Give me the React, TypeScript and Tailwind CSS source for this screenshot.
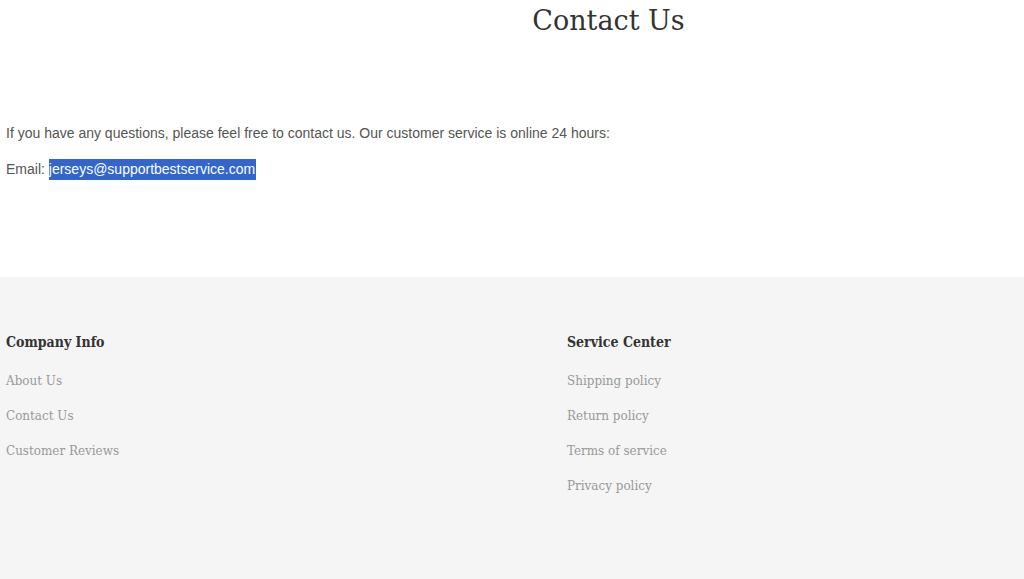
import React from "react";

const serif = { fontFamily: '"DejaVu Serif", "Liberation Serif", serif' };
const serifC = { fontFamily: '"DejaVu Serif Condensed", "DejaVu Serif", serif' };

export default function App() {
  return (
    <div className="w-[1024px] h-[579px] overflow-hidden bg-white flex flex-col">
      <div className="h-[277px] flex flex-col">
        <h1
          className="pl-[193px] pt-[1px] text-center text-[27px] leading-[40px] text-[#333] font-normal"
          style={serif}
        >
          Contact Us
        </h1>
        <div
          className="px-[6px] pt-[84px] text-[14px] text-[#555]"
          style={{ fontFamily: '"Liberation Sans", Arial, sans-serif' }}
        >
          <p className="leading-[16px]">
            If you have any questions, please feel free to contact us. Our customer service is online 24 hours:
          </p>
          <p className="mt-[18px] leading-[21px]">
            Email:{" "}
            <span className="inline-block bg-[#3266cc] text-white pr-[1px]">jerseys@supportbestservice.com</span>
          </p>
        </div>
      </div>
      <div className="flex-1 bg-[#f5f5f5] flex px-[6px] pt-[53px]" style={serifC}>
        <div className="w-[561px]">
          <h3 className="text-[14px] font-bold text-[#333] leading-[24px]">Company Info</h3>
          <ul className="mt-[17px] flex flex-col gap-[15px] text-[13.3px] text-[#999] leading-[20px]">
            <li>About Us</li>
            <li>Contact Us</li>
            <li>Customer Reviews</li>
          </ul>
        </div>
        <div>
          <h3 className="text-[14px] font-bold text-[#333] leading-[24px]">Service Center</h3>
          <ul className="mt-[17px] flex flex-col gap-[15px] text-[13.3px] text-[#999] leading-[20px]">
            <li>Shipping policy</li>
            <li>Return policy</li>
            <li>Terms of service</li>
            <li>Privacy policy</li>
          </ul>
        </div>
      </div>
    </div>
  );
}
